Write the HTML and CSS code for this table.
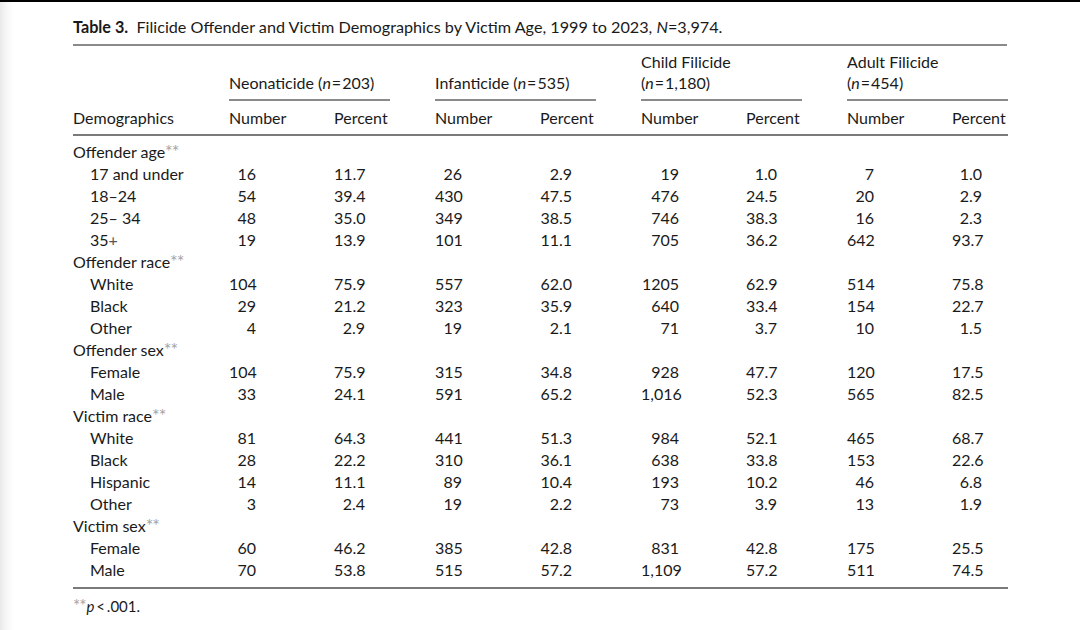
FILE: index.html
```html
<!DOCTYPE html>
<html lang="en">
<head>
<meta charset="utf-8">
<title>Table 3</title>
<link rel="stylesheet" href="styles.css">
</head>
<body>
<div class="topbar"></div>
<div class="doc">
  <div class="title"><b>Table 3.</b>&nbsp; Filicide Offender and Victim Demographics by Victim Age, 1999 to 2023, <i>N</i>=3,974.</div>
  <table class="tbl">
    <colgroup>
      <col class="c-label">
      <col class="c-num"><col class="c-pct">
      <col class="c-num"><col class="c-pct">
      <col class="c-num"><col class="c-pct">
      <col class="c-num"><col class="c-pct-last">
    </colgroup>
    <thead>
      <tr class="grp-row">
        <th></th>
        <th colspan="2" class="grp"><div class="grp-line">Neonaticide (<i>n</i>&#8202;=&#8202;203)</div></th>
        <th colspan="2" class="grp"><div class="grp-line">Infanticide (<i>n</i>&#8202;=&#8202;535)</div></th>
        <th colspan="2" class="grp"><div class="grp-line">Child Filicide<br>(<i>n</i>&#8202;=&#8202;1,180)</div></th>
        <th colspan="2" class="grp grp-last"><div class="grp-line">Adult Filicide<br>(<i>n</i>&#8202;=&#8202;454)</div></th>
      </tr>
      <tr class="col-row">
        <th>Demographics</th>
        <th>Number</th><th>Percent</th>
        <th>Number</th><th>Percent</th>
        <th>Number</th><th>Percent</th>
        <th>Number</th><th>Percent</th>
      </tr>
    </thead>
    <tbody>
      <tr class="cat"><td class="lbl">Offender age<span class="sig">**</span></td><td class="n1"></td><td class="p1"></td><td class="n2"></td><td class="p2"></td><td class="n3"></td><td class="p3"></td><td class="n4"></td><td class="p4"></td></tr>
      <tr><td class="lbl sub">17 and under</td><td class="n1">16</td><td class="p1">11.7</td><td class="n2">26</td><td class="p2">2.9</td><td class="n3">19</td><td class="p3">1.0</td><td class="n4">7</td><td class="p4">1.0</td></tr>
      <tr><td class="lbl sub">18–24</td><td class="n1">54</td><td class="p1">39.4</td><td class="n2">430</td><td class="p2">47.5</td><td class="n3">476</td><td class="p3">24.5</td><td class="n4">20</td><td class="p4">2.9</td></tr>
      <tr><td class="lbl sub">25– 34</td><td class="n1">48</td><td class="p1">35.0</td><td class="n2">349</td><td class="p2">38.5</td><td class="n3">746</td><td class="p3">38.3</td><td class="n4">16</td><td class="p4">2.3</td></tr>
      <tr><td class="lbl sub">35<span class="plus">+</span></td><td class="n1">19</td><td class="p1">13.9</td><td class="n2">101</td><td class="p2">11.1</td><td class="n3">705</td><td class="p3">36.2</td><td class="n4">642</td><td class="p4">93.7</td></tr>
      <tr class="cat"><td class="lbl">Offender race<span class="sig">**</span></td><td class="n1"></td><td class="p1"></td><td class="n2"></td><td class="p2"></td><td class="n3"></td><td class="p3"></td><td class="n4"></td><td class="p4"></td></tr>
      <tr><td class="lbl sub">White</td><td class="n1">104</td><td class="p1">75.9</td><td class="n2">557</td><td class="p2">62.0</td><td class="n3">1205</td><td class="p3">62.9</td><td class="n4">514</td><td class="p4">75.8</td></tr>
      <tr><td class="lbl sub">Black</td><td class="n1">29</td><td class="p1">21.2</td><td class="n2">323</td><td class="p2">35.9</td><td class="n3">640</td><td class="p3">33.4</td><td class="n4">154</td><td class="p4">22.7</td></tr>
      <tr><td class="lbl sub">Other</td><td class="n1">4</td><td class="p1">2.9</td><td class="n2">19</td><td class="p2">2.1</td><td class="n3">71</td><td class="p3">3.7</td><td class="n4">10</td><td class="p4">1.5</td></tr>
      <tr class="cat"><td class="lbl">Offender sex<span class="sig">**</span></td><td class="n1"></td><td class="p1"></td><td class="n2"></td><td class="p2"></td><td class="n3"></td><td class="p3"></td><td class="n4"></td><td class="p4"></td></tr>
      <tr><td class="lbl sub">Female</td><td class="n1">104</td><td class="p1">75.9</td><td class="n2">315</td><td class="p2">34.8</td><td class="n3">928</td><td class="p3">47.7</td><td class="n4">120</td><td class="p4">17.5</td></tr>
      <tr><td class="lbl sub">Male</td><td class="n1">33</td><td class="p1">24.1</td><td class="n2">591</td><td class="p2">65.2</td><td class="n3">1,016</td><td class="p3">52.3</td><td class="n4">565</td><td class="p4">82.5</td></tr>
      <tr class="cat"><td class="lbl">Victim race<span class="sig">**</span></td><td class="n1"></td><td class="p1"></td><td class="n2"></td><td class="p2"></td><td class="n3"></td><td class="p3"></td><td class="n4"></td><td class="p4"></td></tr>
      <tr><td class="lbl sub">White</td><td class="n1">81</td><td class="p1">64.3</td><td class="n2">441</td><td class="p2">51.3</td><td class="n3">984</td><td class="p3">52.1</td><td class="n4">465</td><td class="p4">68.7</td></tr>
      <tr><td class="lbl sub">Black</td><td class="n1">28</td><td class="p1">22.2</td><td class="n2">310</td><td class="p2">36.1</td><td class="n3">638</td><td class="p3">33.8</td><td class="n4">153</td><td class="p4">22.6</td></tr>
      <tr><td class="lbl sub">Hispanic</td><td class="n1">14</td><td class="p1">11.1</td><td class="n2">89</td><td class="p2">10.4</td><td class="n3">193</td><td class="p3">10.2</td><td class="n4">46</td><td class="p4">6.8</td></tr>
      <tr><td class="lbl sub">Other</td><td class="n1">3</td><td class="p1">2.4</td><td class="n2">19</td><td class="p2">2.2</td><td class="n3">73</td><td class="p3">3.9</td><td class="n4">13</td><td class="p4">1.9</td></tr>
      <tr class="cat"><td class="lbl">Victim sex<span class="sig">**</span></td><td class="n1"></td><td class="p1"></td><td class="n2"></td><td class="p2"></td><td class="n3"></td><td class="p3"></td><td class="n4"></td><td class="p4"></td></tr>
      <tr><td class="lbl sub">Female</td><td class="n1">60</td><td class="p1">46.2</td><td class="n2">385</td><td class="p2">42.8</td><td class="n3">831</td><td class="p3">42.8</td><td class="n4">175</td><td class="p4">25.5</td></tr>
      <tr><td class="lbl sub">Male</td><td class="n1">70</td><td class="p1">53.8</td><td class="n2">515</td><td class="p2">57.2</td><td class="n3">1,109</td><td class="p3">57.2</td><td class="n4">511</td><td class="p4">74.5</td></tr>
    </tbody>
  </table>
  <div class="foot"><span class="sig">**</span><i>p</i>&thinsp;&lt;&thinsp;.001.</div>
</div>
</body>
</html>
```
FILE: styles.css
```css
html, body {
  margin: 0;
  padding: 0;
}
body {
  width: 1080px;
  height: 630px;
  overflow: hidden;
  background: linear-gradient(to right, #e9e9e9 0px, #f6f6f6 6px, #ffffff 14px);
  font-family: Lato, "Open Sans", "Liberation Sans", sans-serif;
  font-size: 16px;
  color: #1a1a1a;
}
.topbar {
  height: 2px;
  background: #000;
}
.doc {
  padding: 15px 0 0 73px;
  width: 934px;
}
.title {
  line-height: 20px;
  padding-bottom: 7px;
  border-bottom: 2px solid #8a8a8a;
  font-size: 16.2px;
}
.title b {
  font-weight: 700;
}
.tbl {
  width: 934px;
  table-layout: fixed;
  border-collapse: collapse;
}
.c-label { width: 156px; }
.c-num { width: 105px; }
.c-pct { width: 101px; }
.c-pct-last { width: 56px; }
.tbl th {
  font-weight: 400;
  text-align: left;
  padding: 0;
  white-space: nowrap;
}
.grp-row th {
  vertical-align: bottom;
  line-height: 21px;
  padding-top: 5px;
}
.grp-row th.grp {
  padding-right: 45px;
}
.grp-row th.grp-last {
  padding-right: 0;
}
.grp-line {
  padding-bottom: 6px;
  border-bottom: 2px solid #8a8a8a;
}
.col-row th {
  line-height: 22px;
  padding-top: 6px;
  padding-bottom: 5px;
  border-bottom: 2px solid #7a7a7a;
}
.tbl td {
  line-height: 22px;
  padding: 0;
  white-space: nowrap;
  text-align: right;
}
.tbl td.lbl {
  text-align: left;
}
.tbl td.sub {
  padding-left: 17px;
}
.n1, .n2, .n4 { padding-right: 78px !important; }
.n3 { padding-right: 67px !important; }
.p1, .p3 { padding-right: 70px !important; }
.p2 { padding-right: 69px !important; }
.p4 { padding-right: 26px !important; }
tbody tr:first-child td {
  padding-top: 5px;
}
tbody tr:last-child td {
  padding-bottom: 6px;
  border-bottom: 2px solid #7a7a7a;
}
.sig {
  color: #a4a4a4;
  font-size: 18px;
  vertical-align: 0;
  line-height: 0;
  letter-spacing: -1px;
}
.plus {
  color: #555;
}
.foot {
  line-height: 20px;
  padding-top: 7px;
  font-size: 15px;
}
.foot .sig {
  margin-right: 1px;
  font-size: 17px;
}
```
